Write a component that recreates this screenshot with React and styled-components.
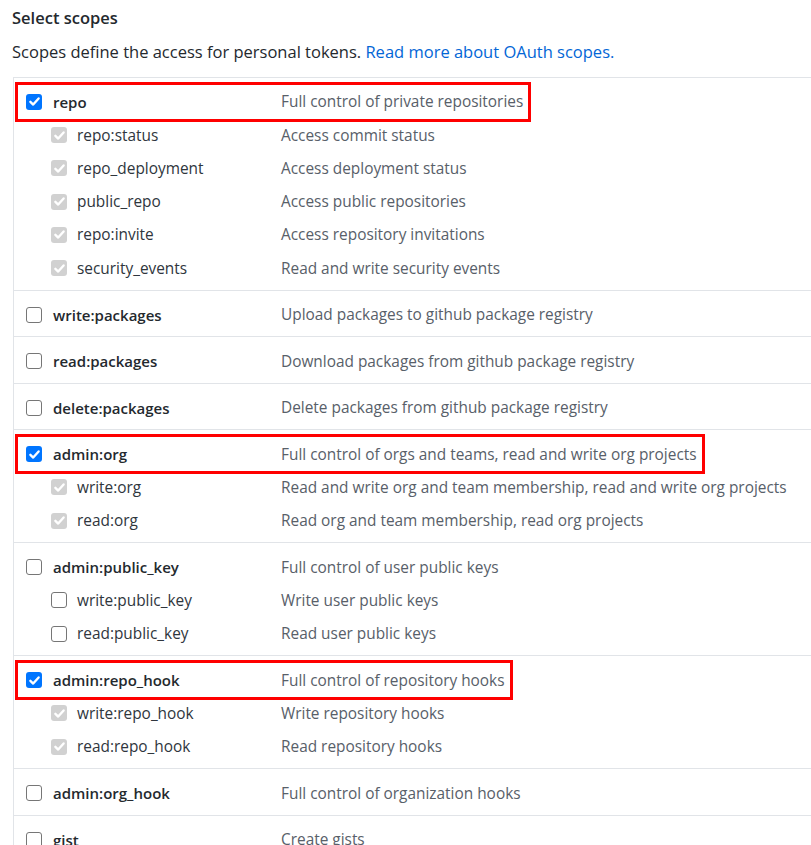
import React from 'react';
import styled, { createGlobalStyle } from 'styled-components';

const GlobalStyle = createGlobalStyle`
  body {
    margin: 0;
    background: #fff;
    overflow: hidden;
    font-family: "Open Sans", "Noto Sans", sans-serif;
    color: #24292e;
  }
`;

const Page = styled.div`
  padding: 6px 0 0 12px;
`;

const Title = styled.h3`
  margin: 0;
  font-size: 16.5px;
  line-height: 24px;
  font-weight: 600;
`;

const Intro = styled.p`
  margin: 10px 0 13px;
  font-size: 16.5px;
  line-height: 24px;
  color: #24292e;

  a {
    color: #0366d6;
    text-decoration: none;
  }
`;

const ScopeBox = styled.div`
  margin-left: 1px;
  width: 1000px;
  border: 1px solid #e1e4e8;
  border-right: none;
`;

const Group = styled.div`
  padding: 7px 0 5px 12px;

  & + & {
    border-top: 1px solid #e1e4e8;
  }
`;

const Row = styled.div`
  display: flex;
  align-items: center;
  width: fit-content;
  height: ${(p) => (p.$sub ? '33.25px' : '33.5px')};
  margin-left: -8px;
  padding: 0 5px 0 ${(p) => (p.$sub ? 33 : 8)}px;
  outline: ${(p) => (p.$marked ? '3px solid #ff0000' : 'none')};
  font-size: 15.4px;
`;

const Box = styled.span`
  flex: 0 0 16px;
  width: 16px;
  height: 16px;
  box-sizing: border-box;
  border-radius: 3px;
  display: flex;
  align-items: center;
  justify-content: center;
  margin-right: ${(p) => (p.$sub ? 10 : 11)}px;
  background: ${(p) =>
    p.$state === 'on' ? '#0075ff' : p.$state === 'off' ? '#fff' : '#d1d1d1'};
  border: ${(p) => (p.$state === 'off' ? '1px solid #767676' : 'none')};
`;

const Name = styled.span`
  width: ${(p) => (p.$sub ? 204 : 228)}px;
  font-size: ${(p) => (p.$sub ? 15.4 : 15)}px;
  font-weight: ${(p) => (p.$sub ? 400 : 600)};
  color: ${(p) => (p.$sub ? '#2f363d' : '#24292e')};
  white-space: nowrap;
`;

const Desc = styled.span`
  color: #586069;
  white-space: nowrap;
`;

const Check = ({ state, sub }) => (
  <Box $state={state} $sub={sub}>
    {state !== 'off' && (
      <svg width="13" height="13" viewBox="0 0 12 12">
        <path
          d="M2.2 6.3 L4.8 8.8 L9.8 3.2"
          fill="none"
          stroke="#fff"
          strokeWidth="2.2"
          strokeLinecap="round"
          strokeLinejoin="round"
        />
      </svg>
    )}
  </Box>
);

const groups = [
  {
    name: 'repo',
    desc: 'Full control of private repositories',
    on: true,
    marked: true,
    subs: [
      ['repo:status', 'Access commit status'],
      ['repo_deployment', 'Access deployment status'],
      ['public_repo', 'Access public repositories'],
      ['repo:invite', 'Access repository invitations'],
      ['security_events', 'Read and write security events'],
    ],
  },
  { name: 'write:packages', desc: 'Upload packages to github package registry' },
  { name: 'read:packages', desc: 'Download packages from github package registry' },
  { name: 'delete:packages', desc: 'Delete packages from github package registry' },
  {
    name: 'admin:org',
    desc: 'Full control of orgs and teams, read and write org projects',
    on: true,
    marked: true,
    subs: [
      ['write:org', 'Read and write org and team membership, read and write org projects'],
      ['read:org', 'Read org and team membership, read org projects'],
    ],
  },
  {
    name: 'admin:public_key',
    desc: 'Full control of user public keys',
    subs: [
      ['write:public_key', 'Write user public keys'],
      ['read:public_key', 'Read user public keys'],
    ],
  },
  {
    name: 'admin:repo_hook',
    desc: 'Full control of repository hooks',
    on: true,
    marked: true,
    subs: [
      ['write:repo_hook', 'Write repository hooks'],
      ['read:repo_hook', 'Read repository hooks'],
    ],
  },
  { name: 'admin:org_hook', desc: 'Full control of organization hooks' },
  { name: 'gist', desc: 'Create gists' },
];

const App = () => (
  <>
    <GlobalStyle />
    <Page>
      <Title>Select scopes</Title>
      <Intro>
        Scopes define the access for personal tokens.{' '}
        <a href="#scopes">Read more about OAuth scopes.</a>
      </Intro>
      <ScopeBox>
        {groups.map((g) => (
          <Group key={g.name}>
            <Row $marked={g.marked}>
              <Check state={g.on ? 'on' : 'off'} />
              <Name>{g.name}</Name>
              <Desc>{g.desc}</Desc>
            </Row>
            {(g.subs || []).map(([name, desc]) => (
              <Row $sub key={name}>
                <Check state={g.on ? 'locked' : 'off'} sub />
                <Name $sub>{name}</Name>
                <Desc>{desc}</Desc>
              </Row>
            ))}
          </Group>
        ))}
      </ScopeBox>
    </Page>
  </>
);

export default App;
